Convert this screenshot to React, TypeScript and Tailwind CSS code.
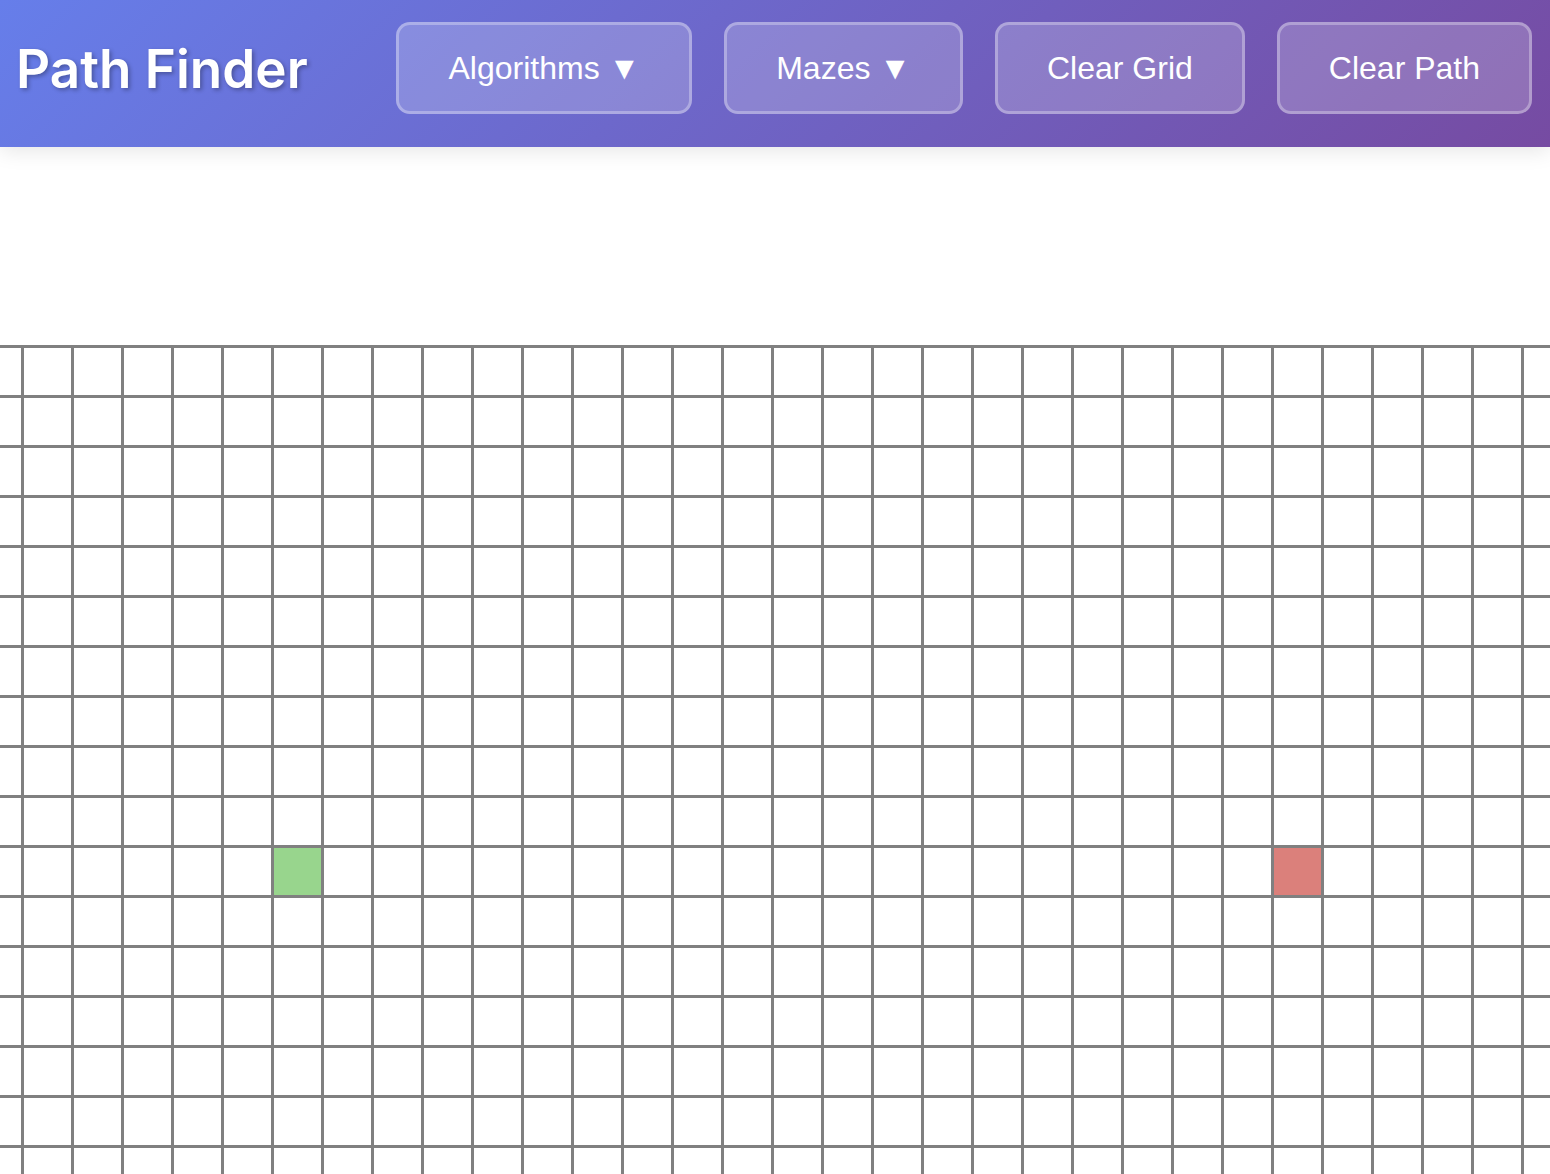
import React from 'react';

const ROWS = 17;
const COLS = 32;
const START = { row: 10, col: 6 };
const END = { row: 10, col: 26 };

const buttons = ['Algorithms ▼', 'Mazes ▼', 'Clear Grid', 'Clear Path'];

const Cell: React.FC<{ row: number; col: number }> = ({ row, col }) => {
    let bg = 'bg-white';
    if (row === START.row && col === START.col) bg = 'bg-[#98d58d]';
    if (row === END.row && col === END.col) bg = 'bg-[#db807b]';
    return <div className={`w-[47px] h-[47px] ${bg}`} />;
};

const App: React.FC = () => {
    return (
        <div className="h-[1174px] overflow-hidden bg-white">
            <header className="relative z-10 h-[147px] flex items-center justify-between pl-4 pr-[18px] pb-[11px] bg-[linear-gradient(135deg,#667eea_0%,#764ba2_100%)] shadow-[0_4px_20px_rgba(0,0,0,0.1)]">
                <h1 className="mt-[4px] text-white text-[53px] font-semibold [font-family:Inter,'Noto_Sans',sans-serif] [text-shadow:2px_2px_4px_rgba(0,0,0,0.3)]">
                    Path Finder
                </h1>
                <nav className="flex gap-[32px]">
                    {buttons.map(b => (
                        <button
                            key={b}
                            className="h-[92px] px-[49px] rounded-[14px] border-[3px] border-white/30 bg-white/20 text-white text-[32px] [font-family:'Liberation_Sans',Arial,sans-serif]"
                        >
                            {b}
                        </button>
                    ))}
                </nav>
            </header>
            <main className="mt-[198px] overflow-hidden">
                <div className="ml-[-29px] w-max grid grid-cols-[repeat(32,47px)] gap-[3px] p-[3px] bg-[#808080]">
                    {Array.from({ length: ROWS }).map((_, r) =>
                        Array.from({ length: COLS }).map((_, c) => <Cell key={`${r}-${c}`} row={r} col={c} />)
                    )}
                </div>
            </main>
        </div>
    );
};

export default App;
